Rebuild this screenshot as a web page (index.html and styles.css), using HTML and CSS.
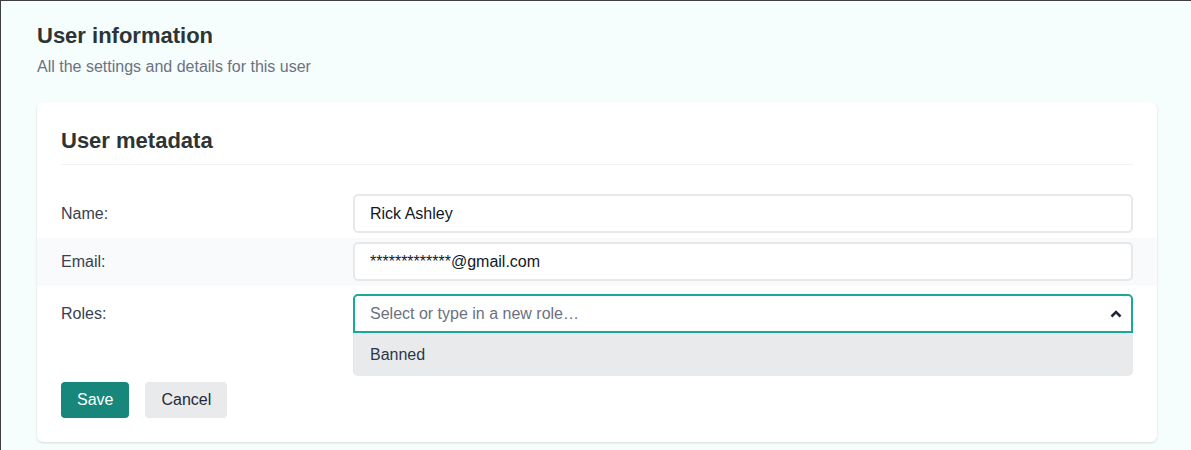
FILE: index.html
```
<!DOCTYPE html>
<html lang="en">
<head>
<meta charset="utf-8">
<title>User information</title>
<link rel="stylesheet" href="styles.css">
</head>
<body>
<div class="page">
  <header class="page-head">
    <h1 class="page-title">User information</h1>
    <p class="page-sub">All the settings and details for this user</p>
  </header>
  <section class="card">
    <h2 class="card-title">User metadata</h2>
    <div class="rows">
      <div class="row">
        <label class="label">Name:</label>
        <div class="field"><div class="input">Rick Ashley</div></div>
      </div>
      <div class="row row-alt">
        <label class="label">Email:</label>
        <div class="field"><div class="input">*************@gmail.com</div></div>
      </div>
      <div class="row row-roles">
        <label class="label">Roles:</label>
        <div class="field">
          <div class="input input-focus">
            <span class="placeholder">Select or type in a new role…</span>
            <svg class="chev" width="12" height="8" viewBox="0 0 12 8"><path d="M1.5 6.5 L6 2 L10.5 6.5" fill="none" stroke="#1f2937" stroke-width="2.6" stroke-linejoin="miter"/></svg>
          </div>
          <div class="menu"><div class="menu-item">Banned</div></div>
        </div>
      </div>
    </div>
    <div class="actions">
      <button class="btn btn-primary">Save</button>
      <button class="btn btn-secondary">Cancel</button>
    </div>
  </section>
</div>
</body>
</html>
```
FILE: styles.css
```
* { box-sizing: border-box; }
html, body { margin: 0; padding: 0; }
body {
  font-family: "Liberation Sans", Arial, sans-serif;
  background: #f6fdfd;
  color: #2d3436;
  border-top: 1px solid #3f3f3f;
  border-left: 1px solid #3f3f3f;
  min-height: 450px;
}
.page { padding: 21px 34px 0 36px; }
.page-title {
  margin: 0;
  font-size: 22px;
  line-height: 28px;
  font-weight: 700;
  color: #2d3436;
}
.page-sub {
  margin: 5px 0 0;
  font-size: 16px;
  line-height: 24px;
  color: #6b7280;
}
.card {
  margin-top: 23px;
  background: #fff;
  border-radius: 6px;
  box-shadow: 0 1px 3px rgba(0,0,0,0.09), 0 1px 2px rgba(0,0,0,0.05);
  padding: 25px 24px 24px;
}
.card-title {
  margin: 0;
  font-size: 22px;
  line-height: 28px;
  font-weight: 700;
  color: #2d3436;
  padding-bottom: 9px;
  border-bottom: 1px solid #f1f3f4;
}
.rows { margin: 25px -24px 0; }
.row {
  display: flex;
  align-items: flex-start;
  padding: 4px 24px 5px;
}
.row-alt { background: #f9fafb; }
.row-roles { padding-top: 8px; padding-bottom: 0; }
.label {
  width: 292px;
  flex: none;
  height: 39px;
  display: flex;
  align-items: center;
  font-size: 16px;
  color: #374151;
}
.field { flex: 1; min-width: 0; }
.input {
  height: 39px;
  border: 2px solid #e7e8ea;
  border-radius: 5px;
  background: #fff;
  padding: 0 15px;
  display: flex;
  align-items: center;
  font-size: 16px;
  color: #111827;
}
.input-focus {
  border-color: #17a99a;
  border-radius: 5px 5px 0 0;
  justify-content: space-between;
  padding-right: 9px;
}
.placeholder { color: #6b7280; }
.chev { display: block; }
.menu {
  background: #e9eaec;
  border-radius: 0 0 5px 5px;
  border-left: 1px solid #e3e4e6;
  height: 43px;
  display: flex;
  align-items: center;
}
.menu-item {
  padding: 0 16px;
  font-size: 16px;
  color: #2d3748;
}
.actions {
  display: flex;
  gap: 16px;
  margin-top: 6px;
}
.btn {
  font-family: "Liberation Sans", Arial, sans-serif;
  font-size: 16px;
  height: 36px;
  padding: 0 16px;
  border: none;
  border-radius: 4px;
  cursor: pointer;
}
.btn-primary { background: #16877a; color: #fff; }
.btn-secondary { background: #e9eaec; color: #1f2937; }
```
